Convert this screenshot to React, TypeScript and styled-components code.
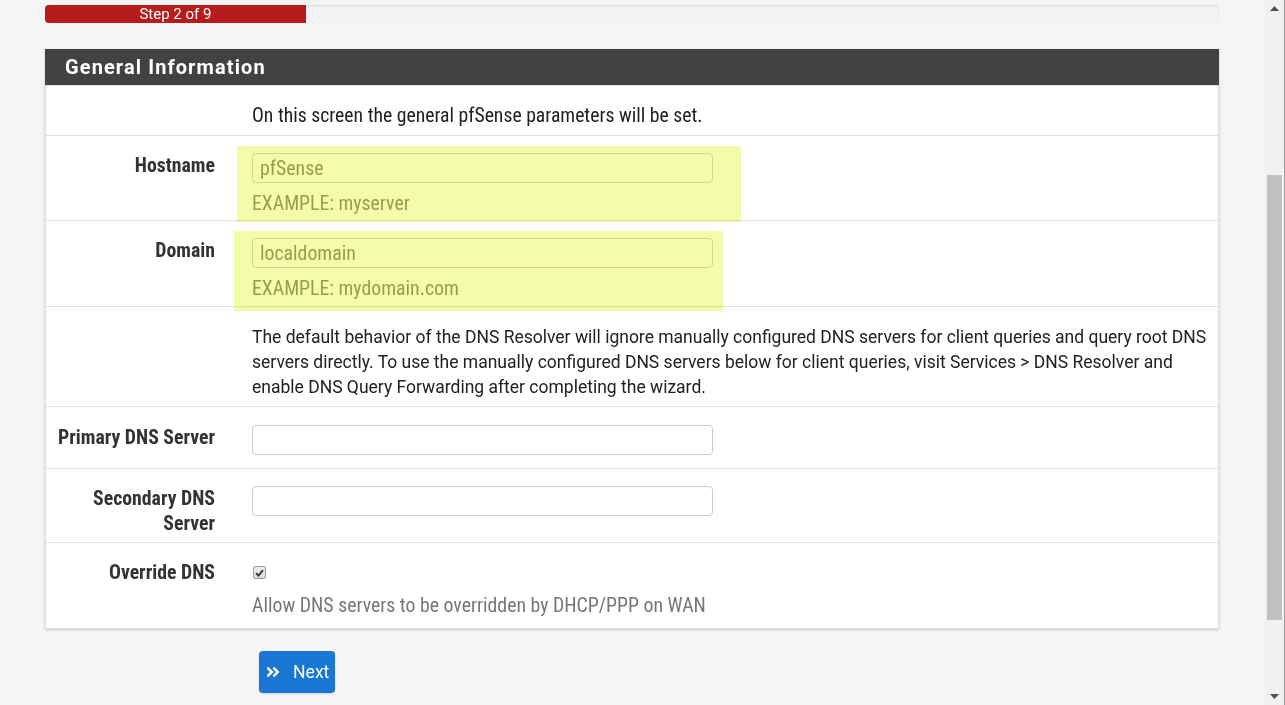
import React from "react";
import styled, { createGlobalStyle } from "styled-components";
import { FaAngleDoubleRight } from "react-icons/fa";

const COND = `"Roboto Condensed", "Liberation Sans Narrow", "DejaVu Sans Condensed", Roboto, sans-serif`;

const GlobalStyle = createGlobalStyle`
  html, body { margin: 0; padding: 0; height: 100%; overflow: hidden; }
  body { background: #f5f5f5; font-family: Roboto, "Noto Sans", sans-serif; color: #212121; }
  * { box-sizing: border-box; }
`;

const Page = styled.div`
  display: flex;
  height: 100vh;
`;

const Main = styled.main`
  flex: 1;
  padding: 5px 46px 0 45px;
  min-width: 0;
`;

const Progress = styled.div`
  height: 18px;
  border-radius: 4px;
  background: #f3f3f3;
  box-shadow: inset 0 1px 2px rgba(0, 0, 0, 0.1);
  overflow: hidden;
  display: flex;
`;

const ProgressFill = styled.div`
  background: #b71c1c;
  color: #fff;
  font-size: 15px;
  line-height: 18px;
  text-align: center;
`;

const Panel = styled.section`
  margin-top: 26px;
  background: #fff;
  border: 1px solid #dcdcdc;
  border-top: none;
  box-shadow: 0 1px 3px rgba(0, 0, 0, 0.18);
`;

const PanelHeading = styled.h2`
  margin: 0;
  height: 36px;
  background: #424242;
  color: #fff;
  font-size: 20px;
  font-weight: 700;
  letter-spacing: 1.1px;
  line-height: 36px;
  padding-left: 20px;
  margin-left: -1px;
  margin-right: -1px;
`;

const Row = styled.div<{ $pt?: number; $pb: number }>`
  position: relative;
  display: grid;
  grid-template-columns: 169px 1fr;
  column-gap: 37px;
  padding: ${(p) => p.$pt ?? 17}px 10px ${(p) => p.$pb}px 0;
  border-top: 1px solid #e2e2e2;
`;

const Label = styled.label`
  text-align: right;
  font-family: ${COND};
  font-weight: 700;
  font-size: 19.8px;
  line-height: 25px;
  color: #333;
`;

const Content = styled.div`
  display: flex;
  flex-direction: column;
  align-items: flex-start;
`;

const Lead = styled.p`
  margin: 0;
  font-family: ${COND};
  font-size: 19.7px;
  line-height: 25px;
  color: #212121;
`;

const Paragraph = styled.p`
  margin: 0;
  font-size: 17.5px;
  line-height: 25px;
  color: #212121;
`;

const Input = styled.input<{ $soft?: boolean }>`
  width: 461px;
  height: 30px;
  border: 1px solid ${(p) => (p.$soft ? "#dadada" : "#cccccc")};
  border-radius: 4px;
  background: #fff;
  padding: 0 7px;
  font-family: ${COND};
  font-size: 19.8px;
  color: #9c9f72;
  outline: none;
`;

const Help = styled.div`
  margin-top: 8px;
  font-family: ${COND};
  font-size: 19.8px;
  line-height: 25px;
  color: #9c9f72;
`;

const HelpDark = styled(Help)`
  color: #777;
`;

const CheckWrap = styled.div`
  height: 25px;
  display: flex;
  align-items: center;
  padding-left: 1px;
`;

const CheckBox = styled.span`
  width: 13px;
  height: 13px;
  border: 1px solid #9a9a9a;
  border-radius: 2px;
  background: linear-gradient(#ededed, #dcdcdc);
  display: flex;
  align-items: center;
  justify-content: center;
  svg { display: block; }
`;

const Highlight = styled.div<{ $l: number; $t: number; $w: number; $h: number }>`
  position: absolute;
  left: ${(p) => p.$l}px;
  top: ${(p) => p.$t}px;
  width: ${(p) => p.$w}px;
  height: ${(p) => p.$h}px;
  background: #f5fca9;
  mix-blend-mode: multiply;
  pointer-events: none;
  z-index: 2;
`;

const Footer = styled.div`
  padding: 22px 0 0 214px;
`;

const NextButton = styled.button`
  display: inline-flex;
  align-items: center;
  gap: 12px;
  height: 42px;
  padding: 0 6px 0 6px;
  border: none;
  border-radius: 4px;
  background: #1976d2;
  color: #fff;
  font-family: Roboto, sans-serif;
  font-size: 17.6px;
  cursor: pointer;
  box-shadow: 0 1px 2px rgba(0, 0, 0, 0.15);
`;

const Scrollbar = styled.div`
  width: 20px;
  background: #f1f1f1;
  border-right: 1px solid #9d9d9d;
  display: flex;
  flex-direction: column;
  align-items: center;
`;

const ArrowBtn = styled.div`
  height: 17px;
  width: 100%;
  display: flex;
  align-items: center;
  justify-content: center;
`;

const Track = styled.div`
  flex: 1;
  width: 100%;
  padding: 158px 2px 0 2px;
`;

const Thumb = styled.div`
  height: 445px;
  background: #c1c1c1;
`;

const Arrow = ({ down }: { down?: boolean }) => (
  <svg width="9" height="5" viewBox="0 0 9 5">
    <path d={down ? "M0 0 H9 L4.5 5 Z" : "M0 5 H9 L4.5 0 Z"} fill="#505050" />
  </svg>
);

export default function App() {
  return (
    <>
      <GlobalStyle />
      <Page>
        <Main>
          <Progress>
            <ProgressFill style={{ width: `${(2 / 9) * 100}%` }}>Step 2 of 9</ProgressFill>
          </Progress>

          <Panel>
            <PanelHeading>General Information</PanelHeading>

            <Row $pb={7}>
              <div />
              <Lead>On this screen the general pfSense parameters will be set.</Lead>
            </Row>

            <Row $pb={4}>
              <Highlight $l={191} $t={10} $w={504} $h={76} />
              <Label>Hostname</Label>
              <Content>
                <Input $soft defaultValue="pfSense" />
                <Help>EXAMPLE: myserver</Help>
              </Content>
            </Row>

            <Row $pb={5}>
              <Highlight $l={188} $t={10} $w={489} $h={80} />
              <Label>Domain</Label>
              <Content>
                <Input $soft defaultValue="localdomain" />
                <Help>EXAMPLE: mydomain.com</Help>
              </Content>
            </Row>

            <Row $pt={18} $pb={6}>
              <div />
              <Paragraph>
                The default behavior of the DNS Resolver will ignore manually configured DNS servers for client
                queries and query root DNS servers directly. To use the manually configured DNS servers below for
                client queries, visit Services &gt; DNS Resolver and enable DNS Query Forwarding after completing
                the wizard.
              </Paragraph>
            </Row>

            <Row $pt={18} $pb={13}>
              <Label>Primary DNS Server</Label>
              <Content>
                <Input />
              </Content>
            </Row>

            <Row $pb={6}>
              <Label>
                Secondary DNS
                <br />
                Server
              </Label>
              <Content>
                <Input />
              </Content>
            </Row>

            <Row $pb={10}>
              <Label>Override DNS</Label>
              <Content>
                <CheckWrap>
                  <CheckBox>
                    <svg width="9" height="8" viewBox="0 0 9 8">
                      <path d="M1 4.2 L3.4 6.6 L8 1.2" stroke="#333" strokeWidth="1.8" fill="none" />
                    </svg>
                  </CheckBox>
                </CheckWrap>
                <HelpDark>Allow DNS servers to be overridden by DHCP/PPP on WAN</HelpDark>
              </Content>
            </Row>
          </Panel>

          <Footer>
            <NextButton type="button">
              <FaAngleDoubleRight size={16} />
              Next
            </NextButton>
          </Footer>
        </Main>

        <Scrollbar>
          <ArrowBtn>
            <Arrow />
          </ArrowBtn>
          <Track>
            <Thumb />
          </Track>
          <ArrowBtn>
            <Arrow down />
          </ArrowBtn>
        </Scrollbar>
      </Page>
    </>
  );
}
